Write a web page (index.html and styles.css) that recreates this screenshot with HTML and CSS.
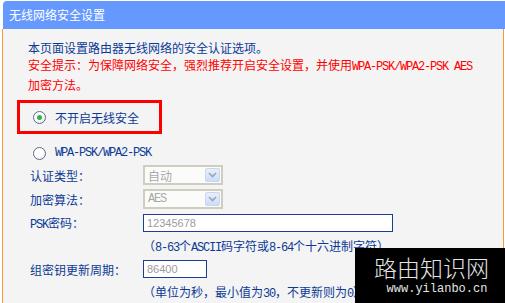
FILE: index.html
```html
<!DOCTYPE html>
<html>
<head>
    <meta charset="utf-8" />
    <title>无线网络安全设置</title>
    <link rel="stylesheet" href="styles.css">
</head>
<body>
    <div class="page">
        <div class="title">无线网络安全设置</div>
        <div class="content">
            <div class="intro">
                <p class="note">本页面设置路由器无线网络的安全认证选项。</p>
                <p class="warn">安全提示：为保障网络安全，强烈推荐开启安全设置，并使用<span class="en">WPA-PSK/WPA2-PSK AES</span></p>
                <p class="warn">加密方法。</p>
            </div>
            <div class="mark-box">
                <div class="option"><span class="radio on"></span>不开启无线安全</div>
            </div>
            <div class="option option-wpa"><span class="radio"></span><span class="en">WPA-PSK/WPA2-PSK</span></div>
            <div class="form">
                <div class="row">
                    <span class="label">认证类型：</span>
                    <div class="select">
                        <span class="select-val">自动</span>
                        <span class="select-btn"><svg width="9" height="6" viewBox="0 0 9 6"><path d="M1 1 L4.5 4.5 L8 1" fill="none" stroke="#9aa6b8" stroke-width="1.6"/></svg></span>
                    </div>
                </div>
                <div class="row">
                    <span class="label">加密算法：</span>
                    <div class="select">
                        <span class="select-val en-val">AES</span>
                        <span class="select-btn"><svg width="9" height="6" viewBox="0 0 9 6"><path d="M1 1 L4.5 4.5 L8 1" fill="none" stroke="#9aa6b8" stroke-width="1.6"/></svg></span>
                    </div>
                </div>
                <div class="row">
                    <span class="label"><span class="en">PSK</span>密码：</span>
                    <div class="input input-long">12345678</div>
                </div>
                <div class="hint">（<span class="en">8-63</span>个<span class="en">ASCII</span>码字符或<span class="en">8-64</span>个十六进制字符）</div>
                <div class="row">
                    <span class="label">组密钥更新周期：</span>
                    <div class="input input-short">86400</div>
                </div>
                <div class="hint">（单位为秒，最小值为<span class="en">30</span>，不更新则为<span class="en">0</span>）</div>
            </div>
        </div>
        <div class="watermark">
            <div class="wm-name">路由知识网</div>
            <div class="wm-url">www.yilanbo.cn</div>
        </div>
    </div>
</body>
</html>
```

FILE: styles.css
```css
html, body {
    margin: 0;
    padding: 0;
    overflow: hidden;
    background: #ffffff;
}

body {
    font-family: "Noto Sans CJK SC", "Liberation Sans", sans-serif;
    font-size: 12px;
    color: #0b3a96;
}

.page {
    position: relative;
    width: 505px;
    height: 303px;
    padding-top: 1px;
    box-sizing: border-box;
}

.title {
    margin-left: 3px;
    height: 28px;
    line-height: 27px;
    padding-left: 6px;
    background: #6699ff;
    border-top-left-radius: 4px;
    color: #ffffff;
}

.content {
    margin-left: 2px;
    width: 502px;
    height: 274px;
    box-sizing: border-box;
    border-left: 1px solid #ff9933;
    border-right: 1px solid #ff9933;
    background: #f4f4f4;
    padding: 10px 0 0 14px;
}

.intro {
    margin-left: 11px;
}

.intro p {
    margin: 0;
    line-height: 17px;
    white-space: nowrap;
}

.warn {
    color: #ff0000;
}

.en {
    font-family: "Liberation Mono", monospace;
    font-size: 12px;
    letter-spacing: -1.2px;
}

.mark-box {
    margin-top: 7px;
    width: 126px;
    height: 28px;
    border: 3px solid #ff0000;
    padding-left: 13px;
    box-sizing: content-box;
    display: flex;
    align-items: center;
}

.mark-box .option {
    width: 113px;
}

.option {
    display: flex;
    align-items: center;
    gap: 9px;
    white-space: nowrap;
}

.option-wpa {
    margin-top: 9px;
    height: 20px;
    padding-left: 16px;
}

.radio {
    position: relative;
    width: 11px;
    height: 11px;
    border-radius: 50%;
    border: 1px solid #5c6f86;
    background: radial-gradient(circle at 40% 35%, #ffffff 40%, #dde3ea 100%);
    flex: none;
}

.radio.on::after {
    content: "";
    position: absolute;
    left: 3px;
    top: 3px;
    width: 5px;
    height: 5px;
    border-radius: 50%;
    background: #2fb34a;
}

.form {
    padding-left: 13px;
}

.row {
    display: flex;
    align-items: center;
    height: 24px;
}

.label {
    width: 113px;
    flex: none;
    white-space: nowrap;
}

.select {
    width: 80px;
    height: 20px;
    box-sizing: border-box;
    border: 2px solid #cfcdbf;
    background: #fbfbf9;
    display: flex;
    align-items: center;
    justify-content: space-between;
    padding: 0 1px 0 3px;
}

.select-val {
    color: #a9a9a9;
}

.en-val {
    font-family: "Liberation Mono", monospace;
    font-size: 12px;
    letter-spacing: -1.2px;
}

.select-btn {
    width: 15px;
    height: 14px;
    box-sizing: border-box;
    border: 1px solid #c8d6ee;
    border-radius: 2px;
    background: linear-gradient(#e8effc, #cddcf6);
    display: flex;
    align-items: center;
    justify-content: center;
}

.input {
    height: 18px;
    line-height: 16px;
    box-sizing: border-box;
    border: 1px solid #1c3d94;
    background: #ffffff;
    padding-left: 3px;
    color: #9c9c9c;
    font-family: "Liberation Sans", sans-serif;
    font-size: 11px;
}

.input-long {
    width: 250px;
}

.input-short {
    width: 64px;
}

.hint {
    height: 22px;
    line-height: 22px;
    padding-left: 113px;
    white-space: nowrap;
}

.watermark {
    position: absolute;
    left: 355px;
    top: 248px;
    width: 150px;
    height: 55px;
    background: #000000;
    color: #e4e4e4;
    text-align: center;
}

.wm-name {
    margin-top: 5px;
    padding-left: 3px;
    font-size: 23px;
    font-weight: 300;
    line-height: 28px;
}

.wm-url {
    font-family: "Liberation Mono", monospace;
    font-size: 12px;
    line-height: 16px;
    padding-left: 14px;
}
```
